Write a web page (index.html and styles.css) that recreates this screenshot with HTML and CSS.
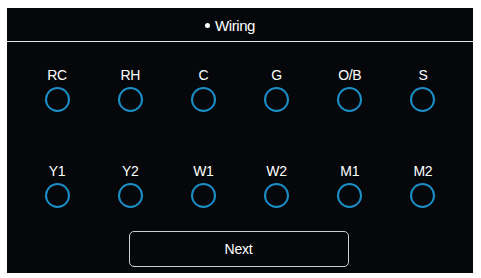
FILE: index.html
```html
<!DOCTYPE html>
<html>
<head>
<meta charset="utf-8">
<link rel="stylesheet" href="styles.css">
</head>
<body>
<div class="panel">
  <div class="header"><span class="dot"></span><span class="title">Wiring</span></div>
  <div class="grid">
    <div class="term"><span class="label">RC</span><span class="ring"></span></div>
    <div class="term"><span class="label">RH</span><span class="ring"></span></div>
    <div class="term"><span class="label">C</span><span class="ring"></span></div>
    <div class="term"><span class="label">G</span><span class="ring"></span></div>
    <div class="term"><span class="label">O/B</span><span class="ring"></span></div>
    <div class="term"><span class="label">S</span><span class="ring"></span></div>
    <div class="term"><span class="label">Y1</span><span class="ring"></span></div>
    <div class="term"><span class="label">Y2</span><span class="ring"></span></div>
    <div class="term"><span class="label">W1</span><span class="ring"></span></div>
    <div class="term"><span class="label">W2</span><span class="ring"></span></div>
    <div class="term"><span class="label">M1</span><span class="ring"></span></div>
    <div class="term"><span class="label">M2</span><span class="ring"></span></div>
  </div>
  <div class="footer"><button class="next">Next</button></div>
</div>
</body>
</html>
```
FILE: styles.css
```css
html, body {
  margin: 0;
  padding: 0;
  background: #ffffff;
}
body {
  padding: 8px 8px 5px 7px;
  font-family: "Liberation Sans", Arial, sans-serif;
  color: #ffffff;
}
.panel {
  width: 466px;
  height: 265px;
  background: #05070a;
  display: flex;
  flex-direction: column;
}
.header {
  height: 34px;
  border-bottom: 1px solid #e6e6e6;
  display: flex;
  align-items: center;
  justify-content: center;
  gap: 5px;
  padding: 1px 20px 0 0;
  box-sizing: border-box;
}
.dot {
  width: 5px;
  height: 5px;
  border-radius: 50%;
  background: #ffffff;
  margin-top: 1px;
}
.title {
  font-size: 15px;
  letter-spacing: -0.4px;
}
.grid {
  display: grid;
  grid-template-columns: repeat(6, 1fr);
  row-gap: 51px;
  padding: 25px 13.5px 0;
}
.term {
  display: flex;
  flex-direction: column;
  align-items: center;
  gap: 4px;
}
.label {
  font-size: 14px;
  line-height: 16px;
  letter-spacing: -0.3px;
}
.ring {
  width: 25px;
  height: 25px;
  box-sizing: border-box;
  border: 2px solid #1b8ec8;
  border-radius: 50%;
}
.footer {
  display: flex;
  justify-content: center;
  padding-top: 23px;
}
.next {
  width: 220px;
  height: 36px;
  background: transparent;
  border: 1px solid #cfcfcf;
  border-radius: 5px;
  color: #ffffff;
  font-family: "Liberation Sans", Arial, sans-serif;
  font-size: 14px;
  letter-spacing: -0.2px;
  margin-right: 3px;
}
```
